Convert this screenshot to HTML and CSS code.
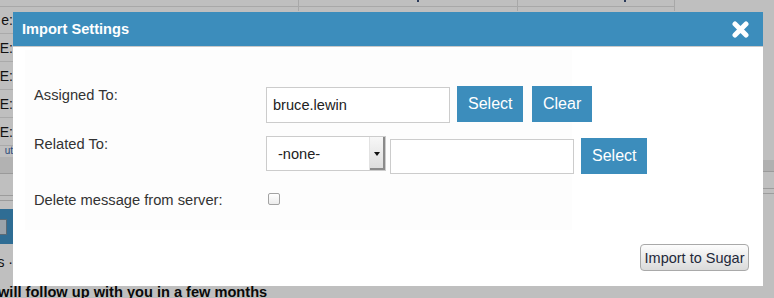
FILE: index.html
```html
<!DOCTYPE html>
<html>
<head>
<meta charset="utf-8">
<link rel="stylesheet" href="styles.css">
</head>
<body>
<div class="bg">
  <div class="toprow">
    <div class="tcell w1"><div class="tline"></div></div>
    <div class="tcell w2"><div class="tline"></div><span class="tdot t1"></span></div>
    <div class="tcell w3"><div class="tline"></div><span class="tdot t2"></span></div>
  </div>
  <div class="bgmain">
    <div class="leftcol">
      <div class="lrow first"><span>e:</span></div>
      <div class="lrow"><span>E:</span></div>
      <div class="lrow"><span>E:</span></div>
      <div class="lrow"><span>E:</span></div>
      <div class="lrow"><span>E:</span></div>
      <div class="lout"><span>ut</span></div>
      <div class="lband"></div>
      <div class="llines"></div>
      <div class="lblue"><span class="licon"></span></div>
      <div class="lsmall"><span>s ·</span></div>
    </div>
    <div class="centercol"></div>
    <div class="rightcol">
      <div class="rband"></div>
      <div class="rlines"></div>
    </div>
  </div>
  <div class="bottomtext">will follow up with you in a few months</div>
</div>

<div class="dialog">
  <div class="dlg-head">
    <span class="dlg-title">Import Settings</span>
    <svg class="dlg-close" width="17" height="17" viewBox="0 0 17 17">
      <path d="M3 3 L14 14 M14 3 L3 14" stroke="#fff" stroke-width="5" stroke-linecap="round" fill="none"/>
    </svg>
  </div>
  <div class="dlg-body">
    <div class="panel">
      <div class="frow r1">
        <div class="flabel">Assigned To:</div>
        <div class="fctrl">
          <div class="tinput i1">bruce.lewin</div>
          <button class="bbtn b1">Select</button>
          <button class="bbtn b2">Clear</button>
        </div>
      </div>
      <div class="frow r2">
        <div class="flabel">Related To:</div>
        <div class="fctrl">
          <div class="dropdown"><span class="ddtext">-none-</span><span class="ddarrow"><span class="tri"></span></span></div>
          <div class="tinput i2"></div>
          <button class="bbtn b3">Select</button>
        </div>
      </div>
      <div class="frow r3">
        <div class="flabel">Delete message from server:</div>
        <div class="fctrl">
          <span class="checkbox"></span>
        </div>
      </div>
    </div>
    <div class="dlg-foot">
      <button class="gbtn">Import to Sugar</button>
    </div>
  </div>
</div>
</body>
</html>
```

FILE: styles.css
```css
html, body {
  margin: 0;
  padding: 0;
}
body {
  width: 774px;
  height: 298px;
  overflow: hidden;
  background: #bfbfbf;
  font-family: "Liberation Sans", Arial, sans-serif;
  position: relative;
}

/* background page (dimmed) */
.bg {
  display: flex;
  flex-direction: column;
  height: 298px;
}
.bg > * {
  flex-shrink: 0;
}
.toprow {
  display: flex;
  height: 12px;
}
.tcell {
  position: relative;
  height: 11px;
  border-right: 1px solid #a8a8a8;
}
.w1 { width: 298px; }
.w2 { width: 218px; }
.w3 { width: 156px; }
.tline {
  height: 6px;
  border-bottom: 1px solid #a8a8a8;
}
.tdot {
  position: absolute;
  top: 0;
  width: 2px;
  height: 2px;
  background: #2a3a5a;
}
.t1 { left: 118px; }
.t2 { left: 106px; }

.bgmain {
  display: flex;
  height: 274px;
}
.leftcol {
  width: 13px;
  display: flex;
  flex-direction: column;
}
.leftcol > * {
  flex-shrink: 0;
}
.lrow {
  height: 27px;
  border-bottom: 1px solid #aaaaaa;
  display: flex;
  justify-content: flex-end;
  align-items: center;
  font-size: 14px;
  color: #111;
  white-space: nowrap;
}
.lrow.first {
  height: 21px;
  align-items: flex-start;
}
.lout {
  height: 10px;
  display: flex;
  justify-content: flex-end;
  align-items: flex-end;
  font-size: 10px;
  line-height: 10px;
  color: #2b4a7a;
  white-space: nowrap;
}
.lband {
  height: 16px;
  background: #b2b2b2;
  border-bottom: 1px solid #9a9a9a;
  margin-top: 1px;
}
.llines {
  height: 4px;
  margin-top: 21px;
  border-top: 1px solid #9c9c9c;
  border-bottom: 1px solid #9c9c9c;
}
.lblue {
  height: 35px;
  margin-top: 8px;
  background: #2f6d94;
  display: flex;
  align-items: center;
}
.licon {
  width: 6px;
  height: 14px;
  background: #9aa3aa;
  border: 1px solid #5a6a75;
  border-left: none;
}
.lsmall {
  height: 20px;
  margin-top: 8px;
  display: flex;
  justify-content: flex-end;
  align-items: center;
  font-size: 14px;
  color: #111;
  white-space: nowrap;
}
.centercol {
  flex: 1;
}
.rightcol {
  width: 11px;
  display: flex;
  flex-direction: column;
}
.rband {
  margin-top: 148px;
  height: 11px;
  background: #b0b0b0;
  border-bottom: 1px solid #9a9a9a;
}
.rlines {
  margin-top: 16px;
  height: 4px;
  border-top: 1px solid #9c9c9c;
  border-bottom: 1px solid #9c9c9c;
}
.bottomtext {
  margin-left: -2px;
  margin-top: -2px;
  font-weight: bold;
  font-size: 14.6px;
  line-height: 17px;
  color: #0a0a0a;
  white-space: nowrap;
}

/* dialog */
.dialog {
  position: absolute;
  left: 13px;
  top: 12px;
  width: 750px;
  height: 274px;
  background: #fff;
  display: flex;
  flex-direction: column;
}
.dlg-head {
  height: 34px;
  background: #3c8dbc;
  border-bottom: 1px solid #c9c9c9;
  display: flex;
  align-items: center;
  justify-content: space-between;
  padding: 0 14px 0 9px;
  flex-shrink: 0;
}
.dlg-title {
  color: #fff;
  font-weight: bold;
  font-size: 14.6px;
  line-height: 17px;
}
.dlg-close {
  display: block;
}
.dlg-body {
  flex: 1;
  display: flex;
  flex-direction: column;
  padding: 3px 0 0 12px;
}
.panel {
  width: 547px;
  height: 180px;
  background: #fdfdfd;
  padding-left: 9px;
  padding-top: 36px;
  box-sizing: border-box;
}
.frow {
  display: flex;
  align-items: flex-start;
}
.r2 { margin-top: 13px; }
.r3 { margin-top: 18px; }
.flabel {
  width: 232px;
  flex-shrink: 0;
  font-size: 14.7px;
  line-height: 17px;
  color: #333;
}
.r1 .flabel { padding-top: 1px; }
.fctrl {
  display: flex;
  align-items: flex-start;
}
.tinput {
  box-sizing: border-box;
  width: 184px;
  border: 1px solid #cccccc;
  background: #fff;
  font-size: 14.6px;
  color: #222;
  display: flex;
  align-items: center;
  padding-left: 6px;
}
.i1 {
  height: 36px;
  margin-top: 1px;
}
.i2 {
  height: 35px;
  margin-top: 3px;
  margin-left: 4px;
}
.bbtn {
  box-sizing: border-box;
  height: 36px;
  border: none;
  background: #3c8dbc;
  color: #fff;
  font-family: "Liberation Sans", Arial, sans-serif;
  font-size: 16px;
  padding: 0 11px;
  margin: 0;
}
.b1 { margin-left: 7px; width: 66px; }
.b2 { margin-left: 9px; width: 60px; }
.b3 { margin-left: 7px; width: 66px; margin-top: 2px; }
.dropdown {
  box-sizing: border-box;
  width: 120px;
  height: 35px;
  border: 1px solid #cccccc;
  background: #fff;
  display: flex;
  align-items: stretch;
}
.ddtext {
  flex: 1;
  display: flex;
  align-items: center;
  padding-left: 11px;
  font-size: 14.6px;
  color: #222;
}
.ddarrow {
  width: 15px;
  background: linear-gradient(#f7f7f7, #dcdcdc);
  border-left: 1px solid #e2e2e2;
  box-shadow: inset -2px -2px 0 #8a8a8a;
  display: flex;
  align-items: center;
  justify-content: center;
}
.tri {
  width: 0;
  height: 0;
  border-left: 3px solid transparent;
  border-right: 3px solid transparent;
  border-top: 4px solid #111;
  margin-right: 1px;
}
.checkbox {
  box-sizing: border-box;
  display: block;
  width: 12px;
  height: 12px;
  margin-top: 1px;
  margin-left: 2px;
  border: 1px solid #a3a3a3;
  border-radius: 2px;
  background: linear-gradient(#ffffff, #ececec);
}
.dlg-foot {
  margin-top: auto;
  display: flex;
  justify-content: flex-end;
  padding: 0 14px 15px 0;
}
.gbtn {
  box-sizing: border-box;
  height: 27px;
  width: 109px;
  padding: 0;
  margin: 0;
  border: 1px solid #a9a9a9;
  border-radius: 4px;
  background: linear-gradient(#fdfdfd, #dadada);
  color: #23283a;
  font-family: "Liberation Sans", Arial, sans-serif;
  font-size: 14.5px;
}
```
